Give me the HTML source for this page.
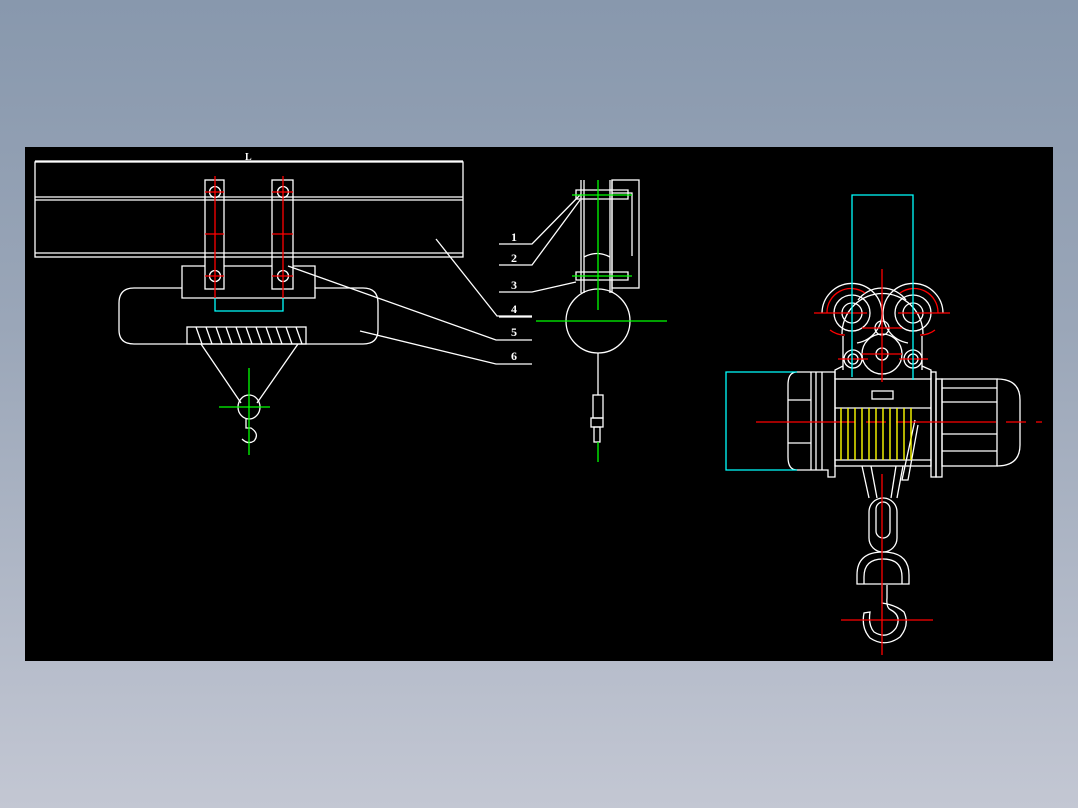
<!DOCTYPE html>
<html><head><style>
html,body{margin:0;padding:0;width:1078px;height:808px;overflow:hidden;background:linear-gradient(#8898ad,#9aa6b8 40%,#c3c7d3);}
svg{position:absolute;left:0;top:0}
text{font-family:"Liberation Serif",serif;fill:#fff;font-weight:bold}
</style></head><body>
<svg width="1078" height="808" viewBox="0 0 1078 808">
<rect x="25" y="147" width="1028" height="514" fill="#000"/>
<g fill="none" stroke="#fff" stroke-width="1.3">
<line x1="35" y1="161" x2="463" y2="161"/>
<rect x="35" y="162" width="428" height="95"/>
<line x1="35" y1="197" x2="463" y2="197"/><line x1="35" y1="200" x2="463" y2="200"/>
<line x1="35" y1="253" x2="463" y2="253"/>
<rect x="205" y="180" width="19" height="109"/><rect x="272" y="180" width="21" height="109"/>
<circle cx="215" cy="192" r="5.5"/><circle cx="283" cy="192" r="5.5"/>
<circle cx="215" cy="276" r="5.5"/><circle cx="283" cy="276" r="5.5"/>
<path d="M182 289V266H205M224 266H272M293 266H315V298H182V289"/>
<path d="M182 288H134Q119 288 119 303V330Q119 344 134 344H363Q378 344 378 330V303Q378 288 363 288H315"/>
<rect x="187" y="327" width="119" height="17"/>
<path d="M196 327l6 17M206 327l6 17M216 327l6 17M226 327l6 17M236 327l6 17M246 327l6 17M256 327l6 17M266 327l6 17M276 327l6 17M286 327l6 17M296 327l6 17"/>
<path d="M201 344L241 403M298 344L257 403"/>
<ellipse cx="249" cy="407" rx="11" ry="12"/>
<path d="M246 419v9h5q9 6 3 13q-6 4 -12 -2"/>
<path d="M436 239L497 316H532M288 266L496 340H532M360 331L496 364H532"/>
<path d="M499 244H532L581 194M499 265H532L580 200M499 292H532L576 282"/>
<line x1="499" y1="317" x2="532" y2="317"/>
<circle cx="598" cy="321" r="32"/>
<path d="M581 180V293M584 180V293M610 180V293M612 180V293"/>
<rect x="612" y="180" width="27" height="108"/>
<path d="M576 190H628V199H576ZM576 272H628V280H576Z"/>
<path d="M584 257Q597 250 610 257M612 193H632V256"/>
<path d="M598 353V395"/><rect x="593" y="395" width="10" height="23"/><rect x="591" y="418" width="12" height="9"/><rect x="594" y="427" width="6" height="15"/>
<path d="M822 313A30 30 0 1 1 857 343M943 313A30 30 0 1 0 908 343"/>
<circle cx="852" cy="313" r="18"/><circle cx="852" cy="313" r="10"/><circle cx="913" cy="313" r="18"/><circle cx="913" cy="313" r="10"/>
<path d="M842 334A30 30 0 0 1 923 334"/>
<path d="M858 300A30 30 0 0 1 906 300"/>
<circle cx="882" cy="328" r="7"/><circle cx="882" cy="354" r="20"/><circle cx="882" cy="354" r="6"/>
<circle cx="853" cy="359" r="9"/><circle cx="853" cy="359" r="5"/><circle cx="913" cy="359" r="9"/><circle cx="913" cy="359" r="5"/>
<path d="M843 336V370M922 336V370M835 379V370L843 366M931 379V370L922 366"/>
<rect x="835" y="379" width="96" height="87"/>
<line x1="835" y1="408" x2="931" y2="408"/><line x1="835" y1="460" x2="931" y2="460"/>
<rect x="872" y="391" width="21" height="8"/>
<rect x="931" y="372" width="5" height="105"/><rect x="936" y="379" width="6" height="98"/>
<rect x="942" y="379" width="55" height="87"/>
<path d="M942 388H997M942 402H997M942 434H997M942 451H997"/>
<path d="M997 379Q1020 379 1020 400V445Q1020 466 997 466"/>
<path d="M828 372H797Q788 372 788 385V457Q788 470 797 470H828V477H835V372Z"/>
<path d="M811 372V470M816 372V470M822 372V470M788 400H811M788 443H811"/>
<path d="M915 420L902 480H908L918 425"/>
<path d="M862 466L869 498M871 466L877 498M903 466L897 498M896 466L891 498"/>
<rect x="869" y="498" width="28" height="54" rx="14"/><rect x="876" y="502" width="14" height="36" rx="7"/>
<path d="M857 584V575Q857 552 883 552Q909 552 909 575V584ZM864 584V577Q864 559 883 559Q902 559 902 577V584"/>
<path d="M882 585V603Q896 605 904 612Q910 625 900 637Q885 648 870 638Q861 628 864 613L870 612Q868 625 874 632Q887 640 896 628Q902 616 891 610Q886 608 887 598V585"/>
</g>
<g fill="none" stroke="#f00" stroke-width="1.3">
<path d="M215 176V298M283 176V298M205 192H224M205 234H224M205 276H224M272 192H293M272 234H293M272 276H293"/>
<path d="M827 313A24 24 0 0 1 865 293M830 330A24 24 0 0 0 845 335M938 313A24 24 0 0 0 900 293M935 330A24 24 0 0 1 920 335"/>
<path d="M814 313H867M898 313H950M862 328H902M862 354H902M838 359H868M899 359H928"/>
<path d="M882 269V382M882 474V655M756 422H855M866 422H886M896 422H996M1006 422H1026M1036 422H1042M841 620H933"/>
</g>
<g fill="none" stroke="#0f0" stroke-width="1.3">
<path d="M219 407H270M249 368V455M536 321H667M598 180V310M598 442V462M572 195H632M572 276H632"/>
</g>
<g fill="none" stroke="#0ff" stroke-width="1.3">
<path d="M215 298V311H283V298M852 377V195H913V380M797 372H726V470H797"/>
</g>
<g stroke="#ff0" stroke-width="1.4">
<path d="M841 408V460M848 408V460M855 408V460M862 408V460M869 408V460M876 408V460M883 408V460M890 408V460M897 408V460M904 408V460M911 408V460"/>
</g>
<text x="245" y="160" font-size="10">L</text>
<text x="511" y="241" font-size="12">1</text><text x="511" y="262" font-size="12">2</text>
<text x="511" y="289" font-size="12">3</text><text x="511" y="313" font-size="12">4</text>
<text x="511" y="336" font-size="12">5</text><text x="511" y="360" font-size="12">6</text>
</svg>
</body></html>
